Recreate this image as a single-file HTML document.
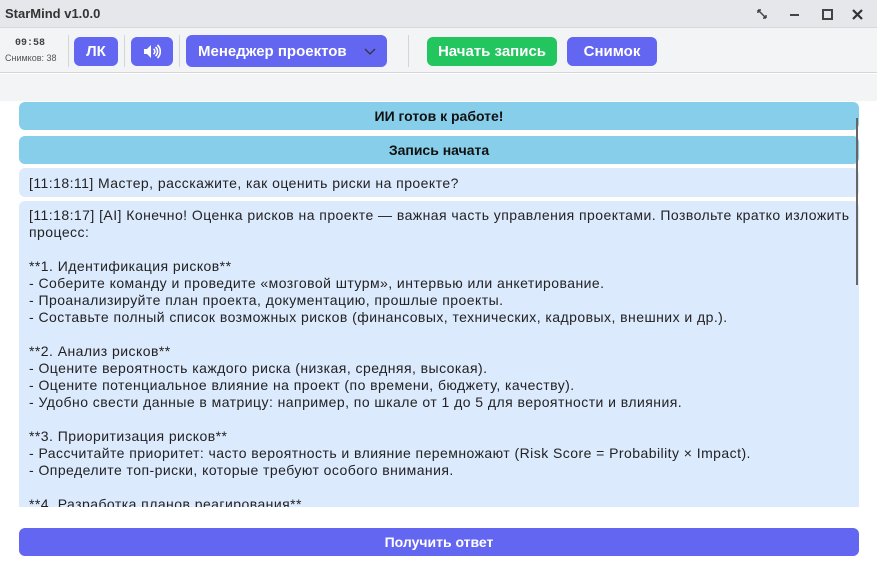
<!DOCTYPE html>
<html><head><meta charset="utf-8"><style>
*{box-sizing:border-box;margin:0;padding:0}
body{width:877px;height:575px;overflow:hidden;background:#fff;font-family:"Liberation Sans","Noto Sans CJK SC",sans-serif;position:relative}
.title{position:absolute;left:0;top:0;width:877px;height:28px;background:#e6e7eb;border-bottom:1px solid #d6d7db}
.title span{position:absolute;left:5px;top:6px;font-size:13px;font-weight:bold;color:#333}
.tool{position:absolute;left:0;top:28px;width:877px;height:45px;background:#f3f4f6;border-bottom:1px solid #d4d5d9}
.gap{position:absolute;left:0;top:74px;width:877px;height:27px;background:#f3f4f6}
.b{position:absolute;border-radius:6px;color:#fff;font-weight:bold;font-size:15px;text-align:center;line-height:29px;height:29px}
.sep{position:absolute;top:35px;width:1px;height:32px;background:#d4d5d9}
.box{position:absolute;left:19px;width:840px;border-radius:6px}
.st{background:#87ceeb;font-size:14px;font-weight:bold;text-align:center;color:#111;line-height:28px}
.msg{background:#dceafe;font-size:14px;color:#222;padding:0 10px;line-height:17px;letter-spacing:0.45px}
</style></head><body>
<div class="title"><span>StarMind v1.0.0</span>
<svg style="position:absolute;left:757px;top:9px" width="10" height="10" viewBox="0 0 10 10"><path d="M1 1L9 9M1 1h3M1 1v3M9 9H6M9 9V6" stroke="#444" stroke-width="1.5" fill="none"/></svg>
<div style="position:absolute;left:790px;top:14px;width:9px;height:2px;background:#444"></div>
<div style="position:absolute;left:822px;top:9px;width:11px;height:11px;border:2px solid #444"></div>
<svg style="position:absolute;left:852px;top:9px" width="11" height="11" viewBox="0 0 11 11"><path d="M1 1L10 10M10 1L1 10" stroke="#333" stroke-width="2.2"/></svg>
</div>
<div class="tool">
<div style="position:absolute;left:15px;top:10px;font-family:'Liberation Mono',monospace;font-size:10px;font-weight:bold;color:#444">09:58</div>
<div style="position:absolute;left:5px;top:25px;font-size:9px;color:#555">Снимков: 38</div>
</div>
<div class="sep" style="left:68px"></div><div class="sep" style="left:124px"></div><div class="sep" style="left:179px"></div><div class="sep" style="left:408px"></div>
<div class="b" style="left:74px;top:37px;width:44px;background:#6366f1">ЛК</div>
<div class="b" style="left:131px;top:37px;width:42px;background:#6366f1"><svg style="margin-top:7px" width="18" height="15" viewBox="0 0 18 15"><path d="M1 5h3l4-4v13l-4-4H1z" fill="#fff"/><path d="M10.5 5a3 3 0 010 5M12.5 3a6 6 0 010 9M14.5 1a9 9 0 010 13" stroke="#fff" stroke-width="1.6" fill="none"/></svg></div>
<div class="b" style="left:186px;top:35px;width:201px;height:32px;line-height:33px;background:#6366f1;text-align:left;padding-left:12px">Менеджер проектов<svg style="position:absolute;left:178px;top:13px" width="12" height="7" viewBox="0 0 12 7"><path d="M1 1l5 5 5-5" stroke="#334" stroke-width="1.3" fill="none"/></svg></div>
<div class="b" style="left:427px;top:37px;width:130px;background:#22c55e">Начать запись</div>
<div class="b" style="left:567px;top:37px;width:90px;background:#6366f1">Снимок</div>
<div class="gap"></div>
<div class="box st" style="top:102px;height:28px">ИИ готов к работе!</div>
<div class="box st" style="top:136px;height:28px">Запись начата</div>
<div class="box msg" style="top:168px;height:29px;line-height:31px">[11:18:11] Мастер, расскажите, как оценить риски на проекте?</div>
<div class="box msg" style="top:201px;height:306px;padding-top:6px;border-radius:6px 6px 0 0;overflow:hidden;white-space:pre">[11:18:17] [AI] Конечно! Оценка рисков на проекте — важная часть управления проектами. Позвольте кратко изложить
процесс:

**1. Идентификация рисков**
- Соберите команду и проведите «мозговой штурм», интервью или анкетирование.
- Проанализируйте план проекта, документацию, прошлые проекты.
- Составьте полный список возможных рисков (финансовых, технических, кадровых, внешних и др.).

**2. Анализ рисков**
- Оцените вероятность каждого риска (низкая, средняя, высокая).
- Оцените потенциальное влияние на проект (по времени, бюджету, качеству).
- Удобно свести данные в матрицу: например, по шкале от 1 до 5 для вероятности и влияния.

**3. Приоритизация рисков**
- Рассчитайте приоритет: часто вероятность и влияние перемножают (Risk Score = Probability × Impact).
- Определите топ-риски, которые требуют особого внимания.

**4. Разработка планов реагирования**</div>
<div style="position:absolute;left:856px;top:118px;width:2px;height:167px;background:#666"></div>
<div class="b" style="left:19px;top:528px;width:840px;height:28px;line-height:28px;font-size:14px;background:#6366f1">Получить ответ</div>
</body></html>
